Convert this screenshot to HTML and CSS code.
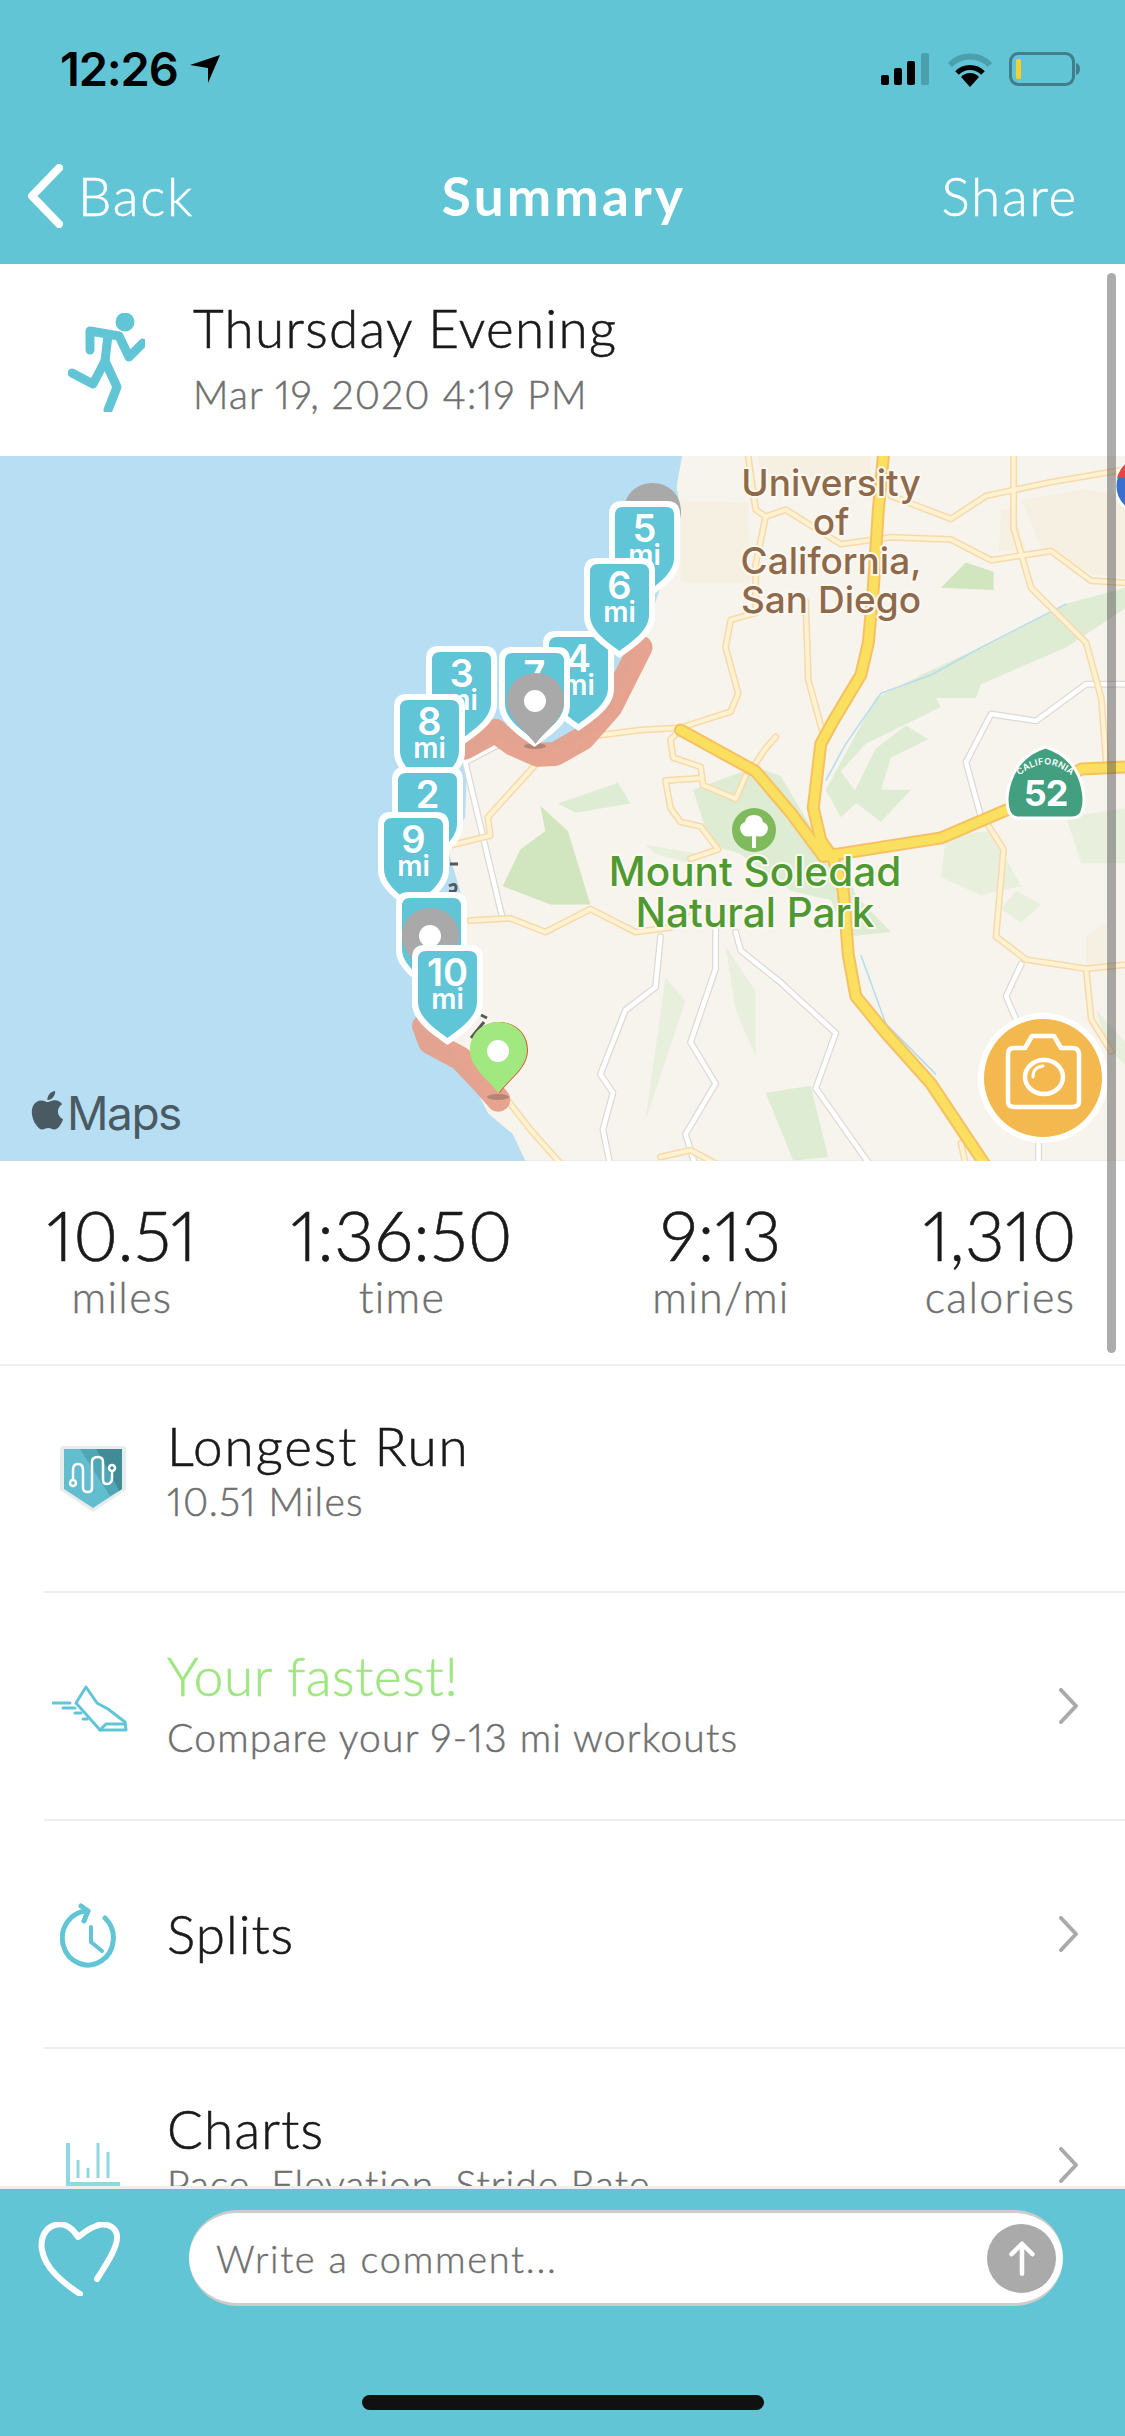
FILE: index.html
```html
<!DOCTYPE html>
<html lang="en">
<head>
<meta charset="utf-8">
<title>Summary</title>
<link rel="stylesheet" href="styles.css">
</head>
<body>
<div class="screen">
  <header class="top">
    <div class="status">
      <div class="time"><span>12:26</span>
        <svg class="loc" viewBox="0 0 30 30"><path d="M30 1 L0 11 L18 14 L18 29 Z"/></svg>
      </div>
      <div class="status-icons">
        <svg class="signal" viewBox="0 0 50 32"><rect x="0" y="22" width="8" height="10" rx="2"/><rect x="13" y="15" width="8" height="17" rx="2"/><rect x="26" y="8" width="8" height="24" rx="2"/><rect class="dim" x="40" y="0" width="8" height="32" rx="2"/></svg>
        <svg class="wifi" viewBox="0 0 46 34"><path class="dim-stroke" d="M3 12 A28 28 0 0 1 43 12" /><path class="wifi-mid" d="M10 20 A18 18 0 0 1 36 20"/><path d="M23 34 L14 24 A12 12 0 0 1 32 24 Z"/></svg>
        <svg class="battery" viewBox="0 0 72 34"><rect class="bat-body" x="1.5" y="1.5" width="63" height="31" rx="8"/><rect class="bat-level" x="7" y="7" width="5" height="20" rx="1.5"/><path class="bat-nub" d="M67 11 Q71 12 71 17 Q71 22 67 23 Z"/></svg>
      </div>
    </div>
    <nav class="nav">
      <div class="nav-left">
        <svg class="back" viewBox="0 0 36 64"><path d="M32 4 L5 32 L32 60"/></svg>
        <span>Back</span>
      </div>
      <div class="nav-title">Summary</div>
      <div class="nav-right">Share</div>
    </nav>
  </header>

  <main class="content">
    <section class="activity">
      <svg class="runner" viewBox="68 313 77 99">
        <circle class="runner-head" cx="125" cy="322" r="9.5"/>
        <path d="M90 350 L90 331 L119 336 L129 357 L143 343"/>
        <path d="M72 373 L93 384 L105 361 L108 335"/>
        <path d="M105 361 L117 387 L108 410"/>
      </svg>
      <div class="activity-text">
        <div class="title title-thu">Thursday Evening</div>
        <div class="sub">Mar 19, 2020 4:19 PM</div>
      </div>
    </section>

    <section class="map">
      <svg class="map-svg" viewBox="0 456 1125 705" preserveAspectRatio="none">
        <defs>
          <g id="major">
            <path d="M1085 13 L1075 130 L1065 300 L1055 420 L1040 490 L985 590 L960 640 L945 780 L960 850 L985 890 L1005 960 L1015 1100 L1030 1190 L1090 1270 L1180 1380 L1290 1560"/>
            <path d="M680 610 L830 700 L900 790 L965 885"/>
            <path d="M965 885 L1200 845 L1340 780 L1480 695 L1580 690"/>
          </g>
          <g id="minor">
            <path d="M490 625 L600 610 L680 605 L780 570 L795 530 L770 430 L780 370 L830 355"/>
            <path d="M815 13 L830 130 L850 145 L830 250 L830 350"/>
            <path d="M850 145 L890 130 L1000 205 L1100 190 L1220 195 L1300 240 L1420 220 L1500 285 L1580 290"/>
            <path d="M1100 100 L1220 150 L1290 100 L1420 70 L1580 40"/>
            <path d="M1345 13 L1345 170 L1380 300 L1490 420 L1520 540 L1530 680"/>
            <path d="M930 330 L935 500 L965 620"/>
            <path d="M395 680 L295 800 L300 840 L225 860"/>
            <path d="M680 610 L660 630 L665 670 L720 690 L725 730 L790 760 L810 710"/>
            <path d="M720 715 L650 720 L660 780 L680 810 L720 820 L755 870 L700 890"/>
            <path d="M825 690 L850 650 L870 625"/>
            <path d="M260 1025 L340 1020 L410 1050 L500 1000 L590 1050 L660 1040 L700 1000"/>
            <path d="M1290 810 L1325 870 L1310 1060 L1370 1110 L1490 1130 L1580 1120"/>
            <path d="M1490 1130 L1500 1240 L1540 1310"/>
            <path d="M330 1410 L380 1480 L445 1560"/>
            <path d="M1240 1510 L1250 1560"/>
            <path d="M640 1540 L700 1525 L760 1560"/>
          </g>
          <g id="white">
            <path d="M1580 510 L1490 510 L1390 590 L1300 575 L1250 680 L1280 800"/>
            <path d="M320 640 L250 680 L320 1000 L325 1020"/>
            <path d="M750 1040 L750 1130 L700 1290 L750 1380 L690 1490 L710 1560"/>
            <path d="M640 1060 L630 1170 L570 1220 L520 1360 L545 1400 L525 1480 L540 1560"/>
            <path d="M790 1050 L800 1090 L880 1160 L990 1270 L950 1390 L1060 1560"/>
            <path d="M1360 1120 L1330 1190 L1350 1240"/>
            <path d="M1395 1500 L1395 1560"/>
          </g>
          <path id="pin-outer" d="M13 0H58Q71 0 71 13V58C71 76 52 88 35.5 100C19 88 0 76 0 58V13Q0 0 13 0Z"/>
          <path id="pin-inner" d="M14 6H57Q65 6 65 14V57C65 72 49 83 35.5 93C22 83 6 72 6 57V14Q6 6 14 6Z"/>
          <path id="drop" d="M28.5 0C45 0 57 12 57 28C57 46 40 56 28.5 71C17 56 0 46 0 28C0 12 12 0 28.5 0Z"/>
          <g id="pin">
            <use href="#pin-outer" class="pin-white"/>
            <use href="#pin-inner" class="pin-teal"/>
          </g>
          <path id="arc" d="M1018 777 Q1045 752 1073 777"/>
        </defs>

        <rect class="water" x="0" y="456" width="1125" height="705"/>
        <g transform="translate(340 450) scale(.5008 .4591)">
          <path class="land" d="M683 13 L672 80 L680 130 L640 300 L600 420 L545 560 L500 625 L466 636 L400 660 L314 627 L254 675 L250 800 L215 870 L240 960 L250 1100 L260 1200 L200 1260 L240 1340 L290 1400 L280 1411 L296 1445 L345 1490 L370 1548 L1568 1548 L1568 13 Z"/>
          <path class="campus" d="M680 110 L815 115 L820 290 L680 290 Z"/>
          <path class="campus" d="M835 13 L1060 13 L1060 60 L840 60 Z"/>
          <path class="campus" d="M1320 130 L1345 130 L1370 220 L1315 220 Z"/>
          <path class="campus" d="M1360 110 L1480 85 L1568 100 L1568 280 L1500 270 L1400 210 Z"/>
          <path class="campus" d="M1490 1060 L1530 1030 L1530 1120 L1490 1120 Z"/>
          <path class="green-1" d="M400 775 L455 830 L500 990 L420 990 L325 950 L360 870 L410 830 Z"/>
          <path class="green-2" d="M435 770 L555 725 L580 770 L470 790 Z"/>
          <path class="green-2" d="M705 740 L830 690 L880 710 L945 830 L1000 875 L1030 970 L1100 1050 L1010 1060 L980 980 L900 960 L800 880 L740 860 Z"/>
          <path class="green-2" d="M970 740 L1020 640 L1070 540 L1180 480 L1300 420 L1450 335 L1568 300 L1568 345 L1450 430 L1280 510 L1270 540 L1190 540 L1200 560 L1050 640 L1000 700 L1040 760 L1000 800 Z"/>
          <path class="green-2" d="M1070 650 L1130 600 L1175 630 L1100 670 L1080 740 L1140 740 L1080 810 L1020 760 Z"/>
          <path class="green-3" d="M1210 840 L1300 830 L1360 950 L1280 970 L1200 930 Z"/>
          <path class="green-3" d="M1450 800 L1568 780 L1568 900 L1480 900 Z"/>
          <path class="green-3" d="M1350 960 L1400 990 L1360 1030 L1320 1000 Z"/>
          <path class="green-1" d="M1200 300 L1250 245 L1305 265 L1305 305 Z"/>
          <path class="green-2" d="M850 1400 L940 1385 L975 1540 L905 1548 Z"/>
          <path class="green-3" d="M770 1080 L830 1180 L830 1320 L790 1220 Z"/>
          <path class="green-3" d="M650 1150 L690 1200 L610 1460 Z"/>
          <path class="green-3" d="M1510 1220 L1568 1290 L1568 1340 L1530 1300 Z"/>
          <path class="green-3" d="M610 860 L720 880 L700 900 L630 880 Z"/>
          <path class="creek" d="M970 720 L1010 640 L1080 530 L1180 490 L1280 430 L1450 335"/>
          <path class="creek" d="M1040 1100 L1090 1250 L1190 1360"/>
          <use href="#white" class="road white-edge"/>
          <use href="#white" class="road white-fill"/>
          <use href="#minor" class="road minor-edge"/>
          <use href="#minor" class="road minor-fill"/>
          <use href="#major" class="road major-edge"/>
          <use href="#major" class="road major-fill"/>
          <path class="route" d="M316 1415 L288 1380 L240 1325 L180 1290 L168 1255 M250 648 L310 612 L345 640 L395 664 L430 662 L485 628 L540 560 L600 430"/>
        </g>
        <ellipse class="shadow" cx="498" cy="1097" rx="11" ry="3"/>
        <ellipse class="shadow" cx="535" cy="746" rx="11" ry="3"/>
        <path class="marks" d="M450 864 L458 864 M449 886 Q456 882 456 888 Q456 893 449 891 M471 1038 L484 1022 M481 1015 L487 1018"/>

        <text class="lbl-uni" x="831" y="496">University</text>
        <text class="lbl-uni" x="831" y="535">of</text>
        <text class="lbl-uni" x="831" y="574">California,</text>
        <text class="lbl-uni" x="831" y="613">San Diego</text>
        <circle class="tree-bg" cx="754" cy="830" r="22"/>
        <path class="tree" d="M752 848 L752 836 Q744 838 741 832 Q738 825 745 822 Q746 815 754 815 Q762 815 763 822 Q770 825 767 832 Q764 838 756 836 L756 848 Z"/>
        <text class="lbl-park" x="755" y="886">Mount Soledad</text>
        <text class="lbl-park" x="755" y="927">Natural Park</text>

        <path class="shield" d="M1045.500 747 C1062 752 1075 764 1081 782 C1084 792 1085 800 1083 808 C1082 815 1078 818 1072 818 L1019 818 C1013 818 1009 815 1008 808 C1006 800 1007 792 1010 782 C1016 764 1029 752 1045.500 747 Z"/>
        <text class="shield-small"><textPath href="#arc" startOffset="50%">CALIFORNIA</textPath></text>
        <text class="shield-num" x="1045.500" y="806">52</text>
        <circle class="interstate" cx="1143" cy="486" r="28"/>
        <path class="interstate-red" d="M1117 478 Q1122 460 1140 458 L1140 478 Z"/>

        <use href="#drop" class="drop-gray" x="624" y="483"/>
        <use href="#pin" x="609" y="501"/>
        <text class="pin-num" x="644.500" y="542">5</text><text class="pin-mi" x="644.500" y="565">mi</text>
        <use href="#pin" x="543" y="631"/>
        <text class="pin-num" x="578.500" y="672">4</text><text class="pin-mi" x="578.500" y="695">mi</text>
        <use href="#pin" x="584" y="558"/>
        <text class="pin-num" x="619.500" y="599">6</text><text class="pin-mi" x="619.500" y="622">mi</text>
        <use href="#pin" x="426" y="646"/>
        <text class="pin-num" x="461.500" y="687">3</text><text class="pin-mi" x="461.500" y="710">mi</text>
        <use href="#pin" x="394" y="694"/>
        <text class="pin-num" x="429.500" y="735">8</text><text class="pin-mi" x="429.500" y="758">mi</text>
        <use href="#pin" x="392" y="767"/>
        <text class="pin-num" x="427.500" y="808">2</text>
        <use href="#pin" x="378" y="812"/>
        <text class="pin-num" x="413.500" y="853">9</text><text class="pin-mi" x="413.500" y="876">mi</text>
        <use href="#pin" x="396" y="892"/>
        <use href="#drop" class="drop-gray" x="402" y="908"/>
        <circle class="dot" cx="430" cy="936" r="11"/>
        <use href="#pin" x="412" y="945"/>
        <text class="pin-num" x="447.500" y="986">10</text><text class="pin-mi" x="447.500" y="1009">mi</text>
        <use href="#pin" x="499" y="647"/>
        <text class="pin-num" x="534.500" y="688">7</text>
        <use href="#drop" class="drop-gray" x="507" y="673"/>
        <circle class="dot" cx="535" cy="701" r="11"/>
        <use href="#drop" class="drop-red" x="471" y="1022"/>
        <use href="#drop" class="drop-green" x="470" y="1022"/>
        <circle class="dot" cx="498" cy="1051" r="11"/>

        <circle class="cam-ring" cx="1043" cy="1078" r="65"/>
        <circle class="cam-bg" cx="1043" cy="1078" r="59"/>
        <path class="cam" d="M1008 1054 Q1008 1048 1014 1048 L1025 1048 L1032 1036 L1054 1036 L1061 1048 L1072 1048 Q1079 1048 1079 1054 L1079 1102 Q1079 1107 1072 1107 L1014 1107 Q1008 1107 1008 1102 Z"/>
        <ellipse class="cam" cx="1044" cy="1077" rx="19" ry="17"/>
        <path class="cam-thin" d="M1033 1077 Q1033 1067 1043 1066"/>

        <path class="maps-apple" transform="translate(29 1091) scale(1.7)" d="M17.05 12.04c-.03-2.86 2.33-4.23 2.44-4.3-1.33-1.95-3.4-2.21-4.14-2.24-1.76-.18-3.44 1.04-4.33 1.04-.89 0-2.27-1.01-3.73-.99-1.92.03-3.69 1.12-4.68 2.83-2 3.46-.51 8.58 1.43 11.39.95 1.37 2.08 2.91 3.57 2.86 1.43-.06 1.97-.93 3.7-.93 1.73 0 2.22.93 3.73.9 1.54-.03 2.52-1.4 3.46-2.78 1.09-1.59 1.54-3.13 1.57-3.21-.03-.02-3-1.15-3.03-4.57zM14.2 3.64c.79-.96 1.32-2.29 1.18-3.62-1.14.05-2.52.76-3.34 1.71-.73.85-1.37 2.21-1.2 3.51 1.27.1 2.57-.65 3.36-1.6z"/>
        <text class="maps-text" x="67" y="1130">Maps</text>
      </svg>
    </section>

    <section class="stats">
      <div class="stat"><div class="stat-num">10.51</div><div class="stat-lbl">miles</div></div>
      <div class="stat"><div class="stat-num">1:36:50</div><div class="stat-lbl">time</div></div>
      <div class="stat"><div class="stat-num">9:13</div><div class="stat-lbl">min/mi</div></div>
      <div class="stat"><div class="stat-num">1,310</div><div class="stat-lbl">calories</div></div>
    </section>

    <section class="list">
      <div class="row">
        <div class="row-icon">
          <svg class="badge" viewBox="0 0 66 66">
            <path class="badge-edge" d="M3 0H63Q66 0 66 3V44L33 66L0 44V3Q0 0 3 0Z"/>
            <path class="badge-face" d="M4 3H62V43L33 62L4 43Z"/>
            <path class="badge-dark" d="M36 3H62V43L59 45Z"/>
            <path class="badge-mid" d="M20 3H36L59 45L50 50Z"/>
            <path class="badge-line" d="M13 33V24Q13 18 18 18 Q23 18 23 24V42Q23 46 28 46 Q32 46 32 42V16Q32 11 38 11 Q43 11 43 16V34Q43 38 47 38 Q52 38 52 32V26"/>
            <circle class="badge-line" cx="13" cy="37" r="3"/><circle class="badge-line" cx="52" cy="22" r="3"/>
          </svg>
        </div>
        <div class="row-text row-text-first"><div class="title title-long">Longest Run</div><div class="sub sub-tight">10.51 Miles</div></div>
      </div>
      <div class="row">
        <div class="row-icon">
          <svg class="shoe" viewBox="52 1684 76 47">
            <path d="M86 1686 L76 1702 L100 1729 L126 1729 L125 1721 L108 1708 L97 1702 Z"/>
            <path d="M100 1729 L106 1723 L125 1723"/>
            <path d="M53 1702 L70 1702"/><path d="M63 1707 L75 1707"/><path d="M75 1712 L81 1712"/><path d="M83 1718 L87 1718"/>
          </svg>
        </div>
        <div class="row-text row-text-second"><div class="title title-green">Your fastest!</div><div class="sub sub-compare">Compare your 9-13 mi workouts</div></div>
        <svg class="chev" viewBox="0 0 20 36"><path d="M2 2 L17 18 L2 34"/></svg>
      </div>
      <div class="row">
        <div class="row-icon">
          <svg class="splits" viewBox="60 1902 60 66">
            <path d="M88 1910 A25.500 27 0 1 0 105 1917"/>
            <path d="M81 1905 L88 1910 L84 1920"/>
            <path class="thin" d="M91 1926 L91 1941 L102 1950"/>
          </svg>
        </div>
        <div class="row-text"><div class="title title-splits">Splits</div></div>
        <svg class="chev" viewBox="0 0 20 36"><path d="M2 2 L17 18 L2 34"/></svg>
      </div>
      <div class="row row-last">
        <div class="row-icon">
          <svg class="charts" viewBox="64 2140 58 46">
            <path d="M68 2141 V2182 H120"/>
            <path class="thin" d="M78 2158 V2176 M88 2166 V2176 M98 2141 V2176 M108 2150 V2176"/>
          </svg>
        </div>
        <div class="row-text"><div class="title title-charts">Charts</div><div class="sub sub-pace">Pace, Elevation, Stride Rate</div></div>
        <svg class="chev" viewBox="0 0 20 36"><path d="M2 2 L17 18 L2 34"/></svg>
      </div>
    </section>
    <div class="scrollbar"></div>
  </main>

  <footer class="footer">
    <div class="composer">
      <svg class="heart" viewBox="38 2222 84 74"><path d="M97 2279 C108 2262 118 2246 117 2236 C116 2226 105 2222 96 2226 C87 2229 80 2236 78 2237 C74 2230 66 2222 55 2225 C44 2228 40 2240 42 2250 C45 2268 62 2282 80 2294"/></svg>
      <div class="input">
        <span class="placeholder">Write a comment...</span>
        <div class="send"><svg viewBox="0 0 40 50"><path d="M20 46 V6 M6 20 L20 6 L34 20"/></svg></div>
      </div>
    </div>
    <div class="home"></div>
  </footer>
</div>
</body>
</html>
```

FILE: styles.css
```css
* { box-sizing: border-box; }
html, body { margin: 0; padding: 0; background: #fff; }
body { font-family: "Lato", "Liberation Sans", sans-serif; font-variant-numeric: proportional-nums; }
.screen { width: 1125px; height: 2436px; display: flex; flex-direction: column; overflow: hidden; }

/* top */
.top { height: 264px; background: #62c5d6; flex: none; display: flex; flex-direction: column; color: #fff; }
.status { height: 132px; padding: 50px 44px 0 60px; display: flex; justify-content: space-between; align-items: flex-start; color: #000; }
.time { display: flex; align-items: center; gap: 12px; font-family: "Inter", "Liberation Sans", sans-serif; font-weight: 600; font-size: 47px; line-height: 38px; letter-spacing: -1.2px; }
.loc { width: 30px; height: 30px; fill: #000; }
.status-icons { display: flex; align-items: flex-start; gap: 16px; padding-top: 2px; }
.signal { width: 50px; height: 32px; fill: #000; margin-top: 1px; }
.signal .dim { fill: #4ba0ad; }
.wifi { width: 46px; height: 34px; margin-top: 1px; fill: #000; }
.dim-stroke { fill: none; stroke: #4ba0ad; stroke-width: 6; }
.wifi-mid { fill: none; stroke: #000; stroke-width: 5; }
.battery { width: 72px; height: 34px; }
.bat-body { fill: none; stroke: #3f7e8a; stroke-width: 3; }
.bat-level { fill: #f7d02e; }
.bat-nub { fill: #3f7e8a; }

.nav { height: 131px; margin-top: 1px; display: grid; grid-template-columns: 1fr auto 1fr; align-items: center; padding: 0 47px 6px 50px; font-size: 53px; font-weight: 300; letter-spacing: 1.8px; -webkit-text-stroke: .5px; }
.nav-left { display: flex; align-items: center; gap: 15px; margin-left: -23px; }
.back { width: 36px; height: 64px; fill: none; stroke: #fff; stroke-width: 8; stroke-linecap: round; stroke-linejoin: round; }
.nav-title { font-weight: 700; letter-spacing: 3.2px; -webkit-text-stroke: 0; }
.nav-right { text-align: right; }

/* content */
.content { flex: 1; position: relative; overflow: hidden; background: #fff; }
.activity { height: 192px; display: flex; align-items: flex-start; padding: 49px 0 0 68px; gap: 48px; }
.runner { width: 77px; height: 99px; flex: none; fill: none; stroke: #62c5d6; stroke-width: 9; stroke-linejoin: round; stroke-linecap: round; }
.runner-head { fill: #62c5d6; stroke: none; }
.activity-text { margin-top: -16px; }
.title { font-size: 53px; line-height: 62px; color: #1a1a1a; font-weight: 300; letter-spacing: .7px; -webkit-text-stroke: .6px; }
.title-thu { letter-spacing: 1.3px; }
.title-long { letter-spacing: 1.9px; }
.title-splits { letter-spacing: 1px; }
.title-charts { letter-spacing: 1.2px; }
.title-green { color: #9fe683; }
.sub { font-size: 39px; line-height: 48px; color: #6f6f6f; margin-top: 11px; font-weight: 300; letter-spacing: 1.2px; -webkit-text-stroke: .5px; }
.sub-tight { margin-top: -2px; }
.sub-pace { letter-spacing: 1px; }

/* map */
.map { height: 705px; overflow: hidden; }
.map-svg { display: block; width: 1125px; height: 705px; font-family: "Inter", "Liberation Sans", sans-serif; }
.water { fill: #b8def3; }
.land { fill: #f7f4ed; }
.campus { fill: #f6f0e3; }
.green-1 { fill: #d1e6bf; }
.green-2 { fill: #deecd3; }
.green-3 { fill: #e8efdd; }
.creek { fill: none; stroke: #b4dcef; stroke-width: 1.500; vector-effect: non-scaling-stroke; }
.road { fill: none; stroke-linejoin: round; stroke-linecap: round; }
#major path, #minor path, #white path { vector-effect: non-scaling-stroke; }
.white-edge { stroke: #dcdad5; stroke-width: 7; }
.white-fill { stroke: #fff; stroke-width: 4.500; }
.minor-edge { stroke: #f8d9ab; stroke-width: 7; }
.minor-fill { stroke: #fdf3d2; stroke-width: 4; }
.major-edge { stroke: #f5c162; stroke-width: 13; }
.major-fill { stroke: #fbdf5e; stroke-width: 9; }
.route { fill: none; stroke: #e6a08c; stroke-width: 24; stroke-linecap: round; stroke-linejoin: round; vector-effect: non-scaling-stroke; opacity: .95; }
.shadow { fill: #8c6a5f; opacity: .55; }
.marks { fill: none; stroke: #55595c; stroke-width: 3; }
.lbl-uni, .lbl-park { text-anchor: middle; font-weight: 500; paint-order: stroke; stroke: #fbf8f1; stroke-width: 4px; stroke-linejoin: round; }
.lbl-uni { font-size: 37px; fill: #8f6a4a; }
.lbl-park { font-size: 40.500px; fill: #4f9a30; }
.tree-bg { fill: #7fba5d; }
.tree { fill: #fff; }
.shield { fill: #429f7f; stroke: #fff; stroke-width: 3; }
.shield-small { text-anchor: middle; font-size: 9px; font-weight: 600; fill: #fff; letter-spacing: .3px; }
.shield-num { text-anchor: middle; font-size: 36px; font-weight: 700; fill: #fff; letter-spacing: -1px; }
.interstate { fill: #3a6fd0; stroke: #fff; stroke-width: 3; }
.interstate-red { fill: #e0483f; }
.pin-white { fill: #fff; }
.pin-teal { fill: #60c5d7; }
.pin-num { text-anchor: middle; font-size: 38px; font-weight: 600; fill: #fff; }
.pin-mi { text-anchor: middle; font-size: 28px; font-weight: 600; fill: #fff; }
.drop-gray { fill: #a9a9a9; }
.drop-green { fill: #a0e87f; }
.drop-red { fill: #d9512f; }
.dot { fill: #fff; }
.cam-ring { fill: #fff; }
.cam-bg { fill: #f3b94f; }
.cam { fill: none; stroke: #fff; stroke-width: 4.500; stroke-linejoin: round; }
.cam-thin { fill: none; stroke: #fff; stroke-width: 3; stroke-linecap: round; }
.maps-apple { fill: #4a5a62; }
.maps-text { font-size: 46px; font-weight: 400; fill: #4a5a62; letter-spacing: -1.5px; }

/* stats */
.stats { height: 205px; border-bottom: 2px solid #eee; display: grid; grid-template-columns: 244px 316px 322px 236px; padding-top: 36px; text-align: center; }
.stat-num { font-size: 69px; line-height: 76px; color: #1a1a1a; font-weight: 300; letter-spacing: .5px; -webkit-text-stroke: .6px; }
.stat-lbl { font-size: 43px; line-height: 48px; color: #6f6f6f; font-weight: 300; letter-spacing: 1.3px; -webkit-text-stroke: .4px; }

/* list */
.list { margin-left: 44px; }
.row { height: 228px; display: flex; align-items: center; border-bottom: 2px solid #eee; padding-right: 46px; }
.row:first-child { height: 227px; }
.row-last { border-bottom: none; height: 139px; align-items: flex-start; padding-top: 49px; overflow: hidden; }
.row-icon { width: 123px; flex: none; display: flex; }
.row-text { flex: 1; min-width: 0; }
.row-text-first { margin-bottom: 17px; }
.row-text-second { margin-bottom: 6px; }
.row .sub { margin-top: 0; }
.row .sub-compare { margin-top: 6px; }
.badge { width: 66px; height: 66px; margin-left: 16px; }
.badge-edge { fill: #e8eceb; }
.badge-face { fill: #62bdcf; }
.badge-dark { fill: #3f8b96; }
.badge-mid { fill: #4fa6b4; }
.badge-line { fill: none; stroke: #fff; stroke-width: 2.500; }
.shoe { width: 76px; height: 47px; margin-left: 8px; margin-top: 4px; fill: none; stroke: #62c5d6; stroke-width: 3; stroke-linejoin: round; stroke-linecap: round; }
.splits { width: 60px; height: 66px; margin-left: 16px; margin-top: 3px; fill: none; stroke: #62c5d6; stroke-width: 5; stroke-linecap: round; stroke-linejoin: round; }
.splits .thin { stroke-width: 4; }
.charts { width: 58px; height: 46px; margin-left: 20px; margin-top: 44px; fill: none; stroke: #8fd7e3; stroke-width: 4; }
.charts .thin { stroke-width: 3; }
.chev { width: 20px; height: 36px; flex: none; fill: none; stroke: #aaa; stroke-width: 4; stroke-linecap: round; stroke-linejoin: round; }
.row-last .chev { margin-top: 49px; }
.scrollbar { position: absolute; top: 9px; right: 9px; width: 9px; height: 1080px; border-radius: 5px; background: rgba(70,70,70,.45); }

/* footer */
.footer { height: 250px; flex: none; background: #62c5d6; border-top: 3px solid #eee; display: flex; flex-direction: column; }
.composer { display: flex; align-items: flex-start; padding: 21px 62px 0 38px; gap: 67px; }
.heart { width: 84px; height: 74px; flex: none; margin-top: 12px; fill: none; stroke: #fff; stroke-width: 6; stroke-linecap: round; stroke-linejoin: round; }
.input { flex: 1; height: 96px; border-radius: 48px; background: #fff; border-top: 3px solid #ccc; border-bottom: 3px solid #ccc; display: flex; align-items: center; justify-content: space-between; padding: 0 7px 0 27px; }
.placeholder { font-size: 38px; color: #6f6f6f; font-weight: 300; letter-spacing: 1.7px; -webkit-text-stroke: .4px; }
.send { width: 69px; height: 69px; border-radius: 50%; background: #aaa; display: flex; align-items: center; justify-content: center; }
.send svg { width: 30px; height: 38px; fill: none; stroke: #fff; stroke-width: 6; stroke-linecap: round; stroke-linejoin: round; }
.home { width: 402px; height: 15px; border-radius: 8px; background: #111; margin: 89px auto 0; }
```
